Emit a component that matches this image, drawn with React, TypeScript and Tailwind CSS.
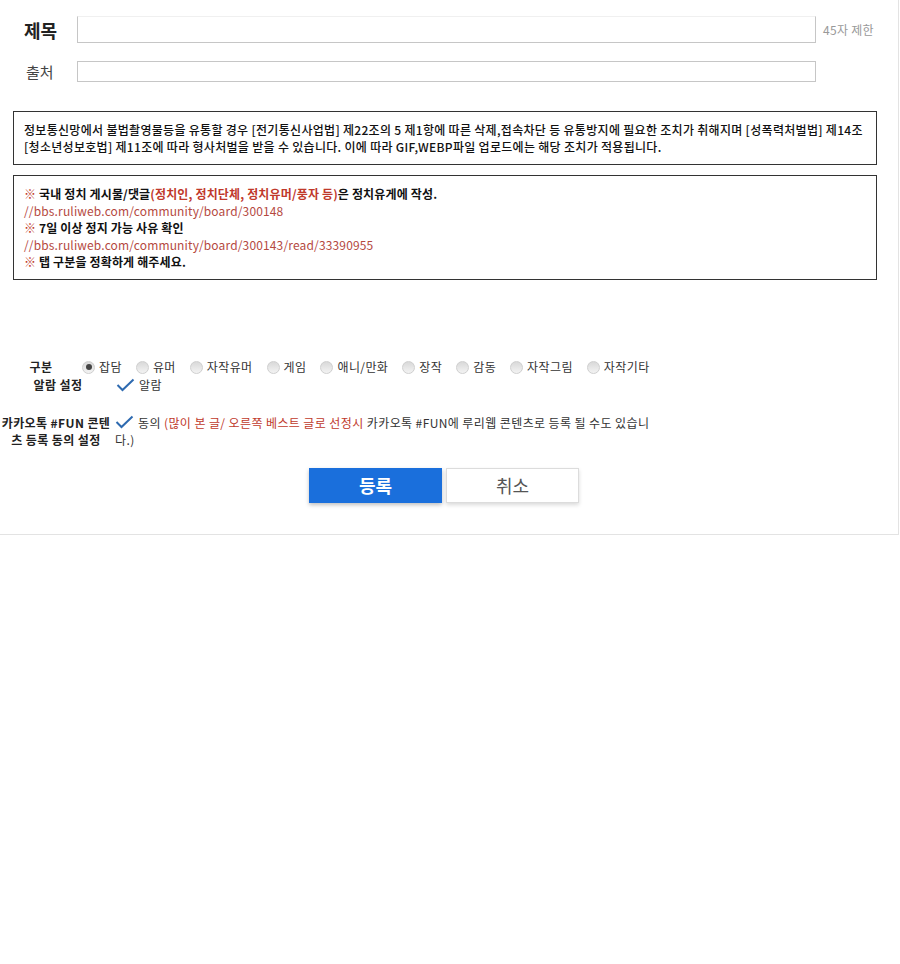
import React from 'react';

const font = "font-['Malgun_Gothic','Noto_Sans_CJK_KR','Noto_Sans',sans-serif]";

const categories = ['잡담', '유머', '자작유머', '게임', '애니/만화', '장작', '감동', '자작그림', '자작기타'];

const Check: React.FC = () => (
  <svg width="19" height="14" viewBox="0 0 19 14" className="shrink-0">
    <polyline points="1.5,7 6.5,12 17.5,1.5" fill="none" stroke="#2e6ab0" strokeWidth="2" />
  </svg>
);

const Radio: React.FC<{ checked?: boolean }> = ({ checked }) => (
  <span className="w-[13px] h-[13px] rounded-full border border-[#cfcfcf] bg-gradient-to-b from-[#d9d9d9] to-[#f3f3f3] flex items-center justify-center shrink-0">
    {checked && <span className="w-[6px] h-[6px] rounded-full bg-[#444]" />}
  </span>
);

export default function App() {
  return (
    <div className={`${font} w-[899px] border-r border-b border-[#e3e3e3] bg-white text-[#222] pt-[16px] pb-[31px]`}>
      {/* 제목 */}
      <div className="flex items-center">
        <div className="w-[77px] pl-[24px] text-[18px] font-bold leading-none">제목</div>
        <div className="w-[739px] h-[27px] border-l border-r border-b border-[#c6c6c6] border-t border-t-[#f0f0f0]" />
        <div className="ml-[7px] text-[12px] text-[#999] tracking-[0.3px]">45자 제한</div>
      </div>

      {/* 출처 */}
      <div className="flex items-center mt-[18px]">
        <div className="w-[77px] pl-[26px] text-[15px] text-[#444] leading-none">출처</div>
        <div className="w-[739px] h-[21px] border border-[#c6c6c6]" />
      </div>

      {/* 안내 1 */}
      <div className="ml-[13px] w-[864px] mt-[29px] border border-[#333] px-[10px] py-[9px] text-[12px] leading-[17px] font-medium tracking-[0.3px] text-[#111]">
        정보통신망에서 불법촬영물등을 유통할 경우 [전기통신사업법] 제22조의 5 제1항에 따른 삭제,접속차단 등 유통방지에 필요한 조치가 취해지며 [성폭력처벌법] 제14조 [청소년성보호법] 제11조에 따라 형사처벌을 받을 수 있습니다. 이에 따라 GIF,WEBP파일 업로드에는 해당 조치가 적용됩니다.
      </div>

      {/* 안내 2 */}
      <div className="ml-[13px] w-[864px] mt-[10px] border border-[#333] px-[10px] py-[9px] text-[12px] leading-[17px] tracking-[0.15px] text-[#111]">
        <div className="font-bold">
          <span className="text-[#c0392b]">※</span> 국내 정치 게시물/댓글<span className="text-[#c0392b]">(정치인, 정치단체, 정치유머/풍자 등)</span>은 정치유게에 작성.
        </div>
        <div className="text-[#b5493f]">//bbs.ruliweb.com/community/board/300148</div>
        <div className="font-bold">
          <span className="text-[#c0392b]">※</span> 7일 이상 정지 가능 사유 확인
        </div>
        <div className="text-[#b5493f]">//bbs.ruliweb.com/community/board/300143/read/33390955</div>
        <div className="font-bold">
          <span className="text-[#c0392b]">※</span> 탭 구분을 정확하게 해주세요.
        </div>
      </div>

      {/* 구분 */}
      <div className="flex items-center mt-[78px] h-[18px] text-[12px] tracking-[0.4px]">
        <div className="w-[82px] text-center font-bold">구분</div>
        <div className="flex items-center gap-[14px] text-[#333]">
          {categories.map((c, i) => (
            <label key={c} className="flex items-center gap-[4px]">
              <Radio checked={i === 0} />
              <span>{c}</span>
            </label>
          ))}
        </div>
      </div>

      {/* 알람 설정 */}
      <div className="flex items-center h-[18px] text-[12px] tracking-[0.4px]">
        <div className="w-[116px] text-center font-bold">알람 설정</div>
        <Check />
        <span className="ml-[4px] text-[#333]">알람</span>
      </div>

      {/* 카카오톡 */}
      <div className="flex mt-[20px] text-[12px] leading-[17px] tracking-[0.4px]">
        <div className="w-[112px] mr-[3px] text-center font-bold">카카오톡 #FUN 콘텐츠 등록 동의 설정</div>
        <div className="w-[540px] text-[#333]">
          <span className="inline-block align-[-1px] mr-[4px]">
            <Check />
          </span>
          <span>동의 </span>
          <span className="text-[#c0392b]">(많이 본 글/ 오른쪽 베스트 글로 선정시</span>
          <span> 카카오톡 #FUN에 루리웹 콘텐츠로 등록 될 수도 있습니다.)</span>
        </div>
      </div>

      {/* 버튼 */}
      <div className="flex justify-center gap-[4px] mt-[20px] pr-[10px]">
        <button className="w-[133px] h-[35px] bg-[#1a6fdc] text-white text-[18px] font-bold shadow-[0_2px_4px_rgba(0,0,0,0.25)]">
          등록
        </button>
        <button className="w-[133px] h-[35px] bg-white border border-[#dcdcdc] text-[#555] text-[18px] shadow-[0_2px_4px_rgba(0,0,0,0.15)]">
          취소
        </button>
      </div>
    </div>
  );
}
